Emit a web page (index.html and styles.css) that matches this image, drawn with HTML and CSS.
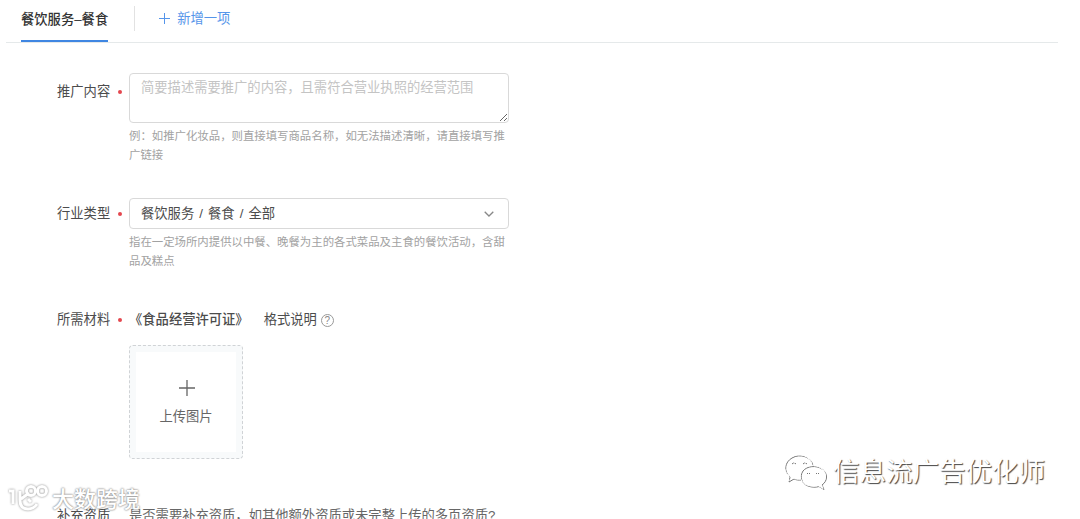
FILE: index.html
```
<!DOCTYPE html>
<html lang="zh-CN">
<head>
    <meta charset="UTF-8" />
    <title>资质提交</title>
    <link rel="stylesheet" href="styles.css">
</head>
<body>
    <div class="tabs">
        <div class="tab active">餐饮服务–餐食</div>
        <div class="tab-add">
            <svg width="11" height="11" viewBox="0 0 11 11"><path d="M5.5 0v11M0 5.5h11" /></svg>
            <span>新增一项</span>
        </div>
    </div>

    <div class="form">
        <div class="row row-content">
            <label class="label required">推广内容</label>
            <div class="field">
                <textarea placeholder="简要描述需要推广的内容，且需符合营业执照的经营范围"></textarea>
                <p class="hint">例：如推广化妆品，则直接填写商品名称，如无法描述清晰，请直接填写推广链接</p>
            </div>
        </div>

        <div class="row row-type">
            <label class="label required">行业类型</label>
            <div class="field">
                <div class="select">
                    <span>餐饮服务 / 餐食 / 全部</span>
                    <svg width="10" height="6" viewBox="0 0 10 6"><path d="M.7.7 5 5 9.3.7" /></svg>
                </div>
                <p class="hint">指在一定场所内提供以中餐、晚餐为主的各式菜品及主食的餐饮活动，含甜品及糕点</p>
            </div>
        </div>

        <div class="row row-material">
            <label class="label required">所需材料</label>
            <div class="field">
                <div class="material">
                    <span class="license">《食品经营许可证》</span>
                    <span class="format">格式说明</span>
                    <span class="help">?</span>
                </div>
                <div class="upload">
                    <div class="upload-inner">
                        <svg width="16" height="16" viewBox="0 0 16 16"><path d="M8 0v16M0 8h16" /></svg>
                        <span>上传图片</span>
                    </div>
                </div>
            </div>
        </div>

        <div class="row row-extra">
            <label class="label">补充资质</label>
            <div class="field">是否需要补充资质，如其他额外资质或未完整上传的多页资质?</div>
        </div>
    </div>

    <div class="mark mark-left">
        <svg width="42" height="30" viewBox="0 0 42 30">
            <path d="M1 7h4v13M12 7v9c0 6 3 9 8 9 4 0 7-2 9-5M13 15l8-6M20 15l3 3" />
            <circle cx="23" cy="7" r="4.500" />
            <circle cx="34" cy="7" r="4.500" />
        </svg>
        <span>大数跨境</span>
    </div>

    <div class="mark mark-right">
        <svg width="44" height="38" viewBox="0 0 44 38">
            <path d="M17 26c-2 .3-5 0-7-1l-5 3 1-5C-1 17 1 8 8 4c8-5 20-1 21 8" />
            <path d="M38 31c6-4 6-12 0-16-6-4-15-3-19 2-4 6-1 13 5 15 4 1.500 8 1.500 11 .5l5 3z" />
            <path d="M8 10q2-3 4 0M19 10q2-3 4 0M23 20q1.500-3 3 0M32 20q1.500-3 3 0" />
        </svg>
        <span>信息流广告优化师</span>
    </div>
</body>
</html>
```

FILE: styles.css
```
* {
    box-sizing: border-box;
}

body {
    margin: 0;
    height: 519px;
    overflow: hidden;
    position: relative;
    background: #fff;
    color: #4c4c4c;
    font-family: "Liberation Sans", "Noto Sans CJK SC", sans-serif;
    font-size: 13.3px;
    line-height: 20px;
}

svg {
    display: block;
    fill: none;
    stroke: currentColor;
    flex-shrink: 0;
}

.tabs {
    display: flex;
    height: 43px;
    margin: 0 22px 0 6px;
    padding-left: 15px;
    border-bottom: 1px solid #e5e9ea;
}

.tab {
    height: 42px;
    padding-top: 10px;
    color: #333;
    font-weight: 500;
    white-space: nowrap;
}

.tab.active {
    border-bottom: 2px solid #3f86e2;
}

.tab-add {
    display: flex;
    align-items: center;
    gap: 7px;
    height: 25px;
    margin: 6px 0 0 26px;
    padding-left: 24px;
    border-left: 1px solid #e2e2e2;
    color: #5595ea;
}

.form {
    padding-left: 57px;
}

.row {
    display: flex;
}

.row-content {
    height: 125px;
    margin-top: 30px;
}

.row-type {
    height: 112px;
}

.row-material {
    height: 196px;
}

.label {
    width: 72px;
    flex-shrink: 0;
}

.row-content .label {
    padding-top: 9px;
}

.row-type .label {
    padding-top: 6px;
}

.required::after {
    content: "";
    display: inline-block;
    width: 4px;
    height: 4px;
    margin-left: 8px;
    border-radius: 50%;
    background: #e4474f;
    vertical-align: 2px;
}

.field {
    width: 380px;
}

textarea {
    display: block;
    width: 380px;
    height: 50px;
    padding: 4px 11px;
    border: 1px solid #d9d9d9;
    border-radius: 4px;
    font: inherit;
    resize: vertical;
}

textarea::placeholder {
    color: #c4c4c4;
}

.hint {
    margin: 4px 0 0;
    color: #a2a2a2;
    font-size: 11.4px;
    line-height: 19px;
}

.select {
    display: flex;
    align-items: center;
    justify-content: space-between;
    height: 31px;
    padding: 0 14px 0 11px;
    border: 1px solid #d9d9d9;
    border-radius: 4px;
    word-spacing: 1.4px;
}

.select svg {
    color: #888;
    stroke-width: 1.3;
}

.material {
    display: flex;
    align-items: center;
}

.license {
    font-weight: 500;
}

.format {
    margin-left: 15px;
}

.help {
    width: 13px;
    height: 13px;
    margin-left: 4px;
    border: 1px solid #999;
    border-radius: 50%;
    color: #888;
    font-size: 10px;
    line-height: 11px;
    text-align: center;
}

.upload {
    width: 114px;
    height: 114px;
    margin-top: 15px;
    padding: 6px;
    border: 1px dashed #d0d3d6;
    border-radius: 4px;
    background: #f8fafb;
}

.upload-inner {
    display: flex;
    flex-direction: column;
    align-items: center;
    gap: 11px;
    height: 100px;
    padding-top: 28px;
    background: #fff;
    color: #666;
}

.upload-inner svg {
    margin-left: 1px;
    stroke-width: 1.3;
}

.row-extra .field {
    white-space: nowrap;
    color: #666;
}

/* watermarks over the page */
.mark {
    position: absolute;
    display: flex;
    align-items: center;
    color: #fff;
    white-space: nowrap;
}

.mark-left {
    left: 8px;
    top: 484px;
    gap: 2px;
    font-size: 22px;
    font-weight: 500;
    line-height: 30px;
    text-shadow: 0 0 2px #888, 0 0 2px #999;
}

.mark-left svg {
    overflow: visible;
    stroke-width: 3;
    filter: drop-shadow(0 0 1px #888);
}

.mark-left span {
    position: relative;
    top: 1px;
}

.mark-right {
    left: 783px;
    top: 453px;
    gap: 6px;
    font-size: 26.5px;
    line-height: 38px;
    text-shadow: 1px 1px 1px #444;
}

.mark-right svg {
    filter: drop-shadow(1px 1px .5px #777);
}
```
